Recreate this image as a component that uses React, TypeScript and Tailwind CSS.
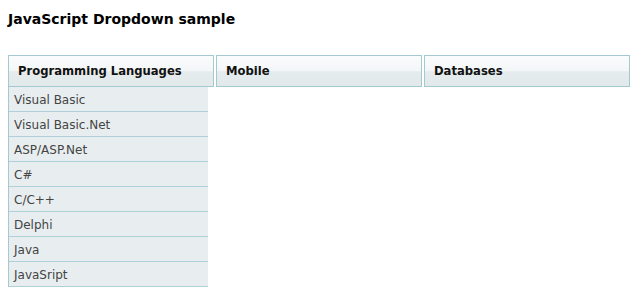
const menus = ["Programming Languages", "Mobile", "Databases"];

const languages = [
  "Visual Basic",
  "Visual Basic.Net",
  "ASP/ASP.Net",
  "C#",
  "C/C++",
  "Delphi",
  "Java",
  "JavaSript",
];

const App = () => {
  return (
    <main
      className="min-h-screen bg-white p-2 text-black"
      style={{ fontFamily: '"DejaVu Sans", Verdana, sans-serif' }}
    >
      <h1 className="mt-[3px] text-[14px] font-bold leading-[17px]">
        JavaScript Dropdown sample
      </h1>
      <div className="mt-[27px] flex gap-[2px]">
        {menus.map((menu, index) => (
          <div key={menu} className="flex w-[206px] flex-col">
            <div className="flex h-[32px] items-center border border-[#a5c9d1] bg-[linear-gradient(to_bottom,#fafcfc_0%,#f3f6f7_50%,#e6ecee_52%,#e1e9eb_100%)] px-[9px] pt-[1px] text-[11.6px] font-bold text-[#111]">
              {menu}
            </div>
            {index === 0 && (
              <ul className="w-[200px] border-l border-[#a5c9d1] bg-[#e8eef0]">
                {languages.map((lang) => (
                  <li
                    key={lang}
                    className="flex h-[25px] items-center border-b border-[#aed0d8] pl-[5px] pt-[1px] text-[12px] text-[#444]"
                  >
                    {lang}
                  </li>
                ))}
              </ul>
            )}
          </div>
        ))}
      </div>
    </main>
  );
};

export default App;
